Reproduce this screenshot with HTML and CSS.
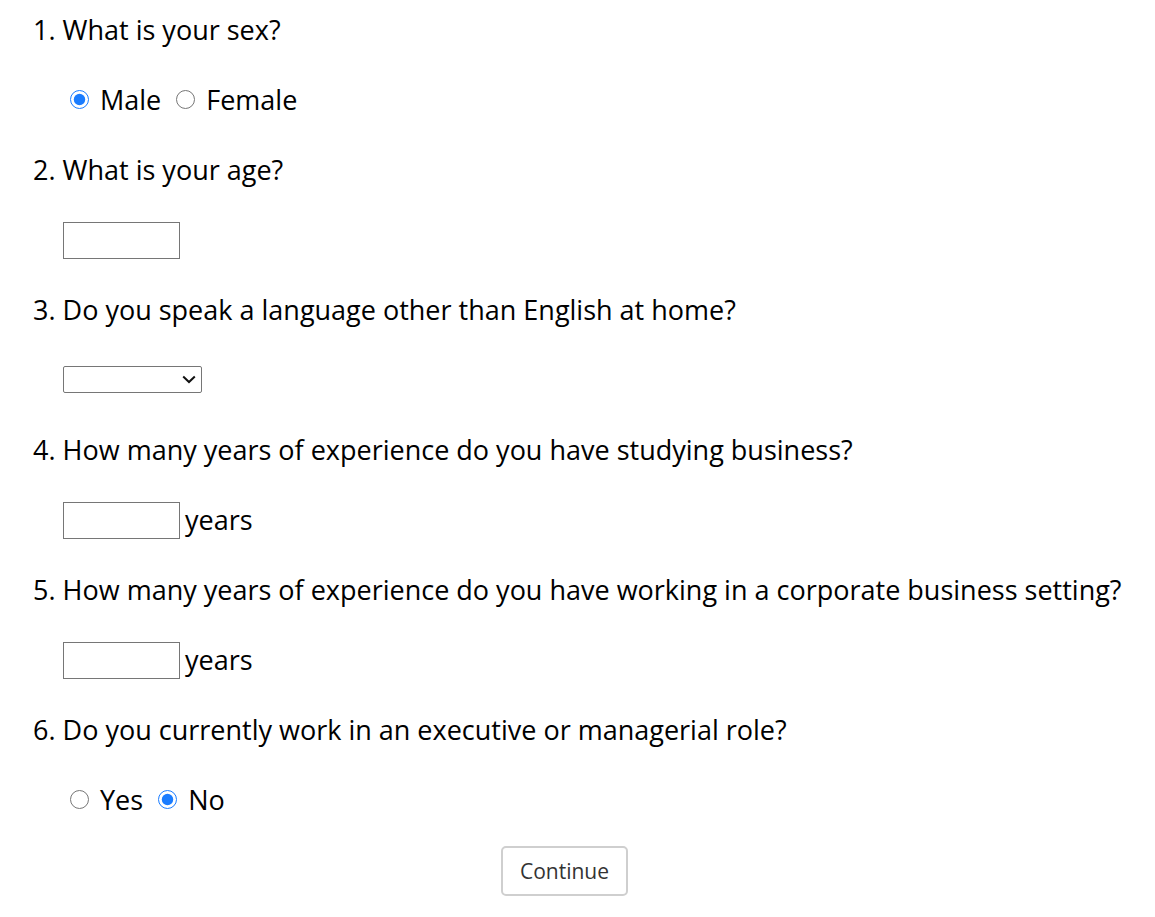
FILE: index.html
```html
<!DOCTYPE html>
<html>
<head>
<meta charset="utf-8">
<link rel="stylesheet" href="styles.css">
</head>
<body>
<form class="survey">
  <div class="row q">1. What is your sex?</div>
  <div class="row a">
    <input class="radio" type="radio" name="sex" checked><span class="opt">Male</span>
    <input class="radio" type="radio" name="sex"><span class="opt">Female</span>
  </div>
  <div class="row q">2. What is your age?</div>
  <div class="row a"><input class="text" type="text"></div>
  <div class="row q">3. Do you speak a language other than English at home?</div>
  <div class="row a">
    <div class="select"><svg class="chev" width="14" height="9" viewBox="0 0 14 9"><path d="M1.2 1.5 L7 7 L12.8 1.5" fill="none" stroke="#111" stroke-width="2"/></svg></div>
  </div>
  <div class="row q">4. How many years of experience do you have studying business?</div>
  <div class="row a"><input class="text" type="text"><span class="unit">years</span></div>
  <div class="row q">5. How many years of experience do you have working in a corporate business setting?</div>
  <div class="row a"><input class="text" type="text"><span class="unit">years</span></div>
  <div class="row q">6. Do you currently work in an executive or managerial role?</div>
  <div class="row a">
    <input class="radio" type="radio" name="exec"><span class="opt">Yes</span>
    <input class="radio" type="radio" name="exec" checked><span class="opt">No</span>
  </div>
  <div class="actions"><button type="button" class="btn">Continue</button></div>
</form>
</body>
</html>
```
FILE: styles.css
```css
html, body {
  margin: 0;
  padding: 0;
  background: #fff;
}
body {
  font-family: "Open Sans", "DejaVu Sans", sans-serif;
  color: #000;
}
.survey {
  width: 1130px;
  padding: 9px 0 0 33px;
  box-sizing: border-box;
  display: flex;
  flex-direction: column;
  gap: 30px;
}
.row {
  height: 40px;
  display: flex;
  align-items: center;
  font-size: 27px;
  white-space: nowrap;
}
.a {
  padding-left: 30px;
}
.radio {
  width: 19px;
  height: 19px;
  margin: 1px 11px 0 7px;
  accent-color: #1a7cff;
}
.opt + .radio {
  margin-left: 15px;
}
.text {
  width: 117px;
  height: 37px;
  box-sizing: border-box;
  border: 1px solid #767676;
  border-radius: 0;
  margin: 2px 0 0 0;
  padding: 0;
  font-size: 16px;
}
.unit {
  margin-left: 5px;
}
.select {
  width: 139px;
  height: 27px;
  box-sizing: border-box;
  border: 1px solid #767676;
  border-radius: 2px;
  margin-top: 1px;
  display: flex;
  align-items: center;
  justify-content: flex-end;
  padding-right: 5px;
}
.actions {
  display: flex;
  justify-content: center;
  margin-top: -3px;
  padding-right: 34px;
}
.btn {
  width: 127px;
  height: 50px;
  box-sizing: border-box;
  background: #fff;
  border: 2px solid #cfcfcf;
  border-radius: 5px;
  font-family: "Open Sans", "DejaVu Sans", sans-serif;
  font-size: 21px;
  color: #333;
  padding: 0;
}
```
